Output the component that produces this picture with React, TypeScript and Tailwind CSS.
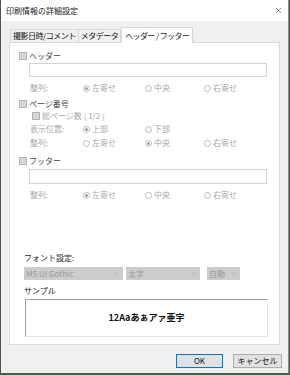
import React from "react";
import { ChevronDown, X } from "lucide-react";

const FONT = "font-['Noto_Sans_CJK_JP','Noto_Sans',sans-serif]";

function CheckBox() {
  return <span className="inline-block h-[8px] w-[8px] shrink-0 border border-[#b4b4b4] bg-[#d6d6d6]" />;
}

function Radio({ checked, label }: { checked?: boolean; label: string }) {
  return (
    <span className="flex items-center gap-[2px] text-[#a8a8a8]">
      <span className="flex h-[7px] w-[7px] items-center justify-center rounded-full border border-[#bcbcbc] bg-white">
        {checked && <span className="h-[3px] w-[3px] rounded-full bg-[#9c9c9c]" />}
      </span>
      <span>{label}</span>
    </span>
  );
}

function OptionRow({ label, opts, mt }: { label: string; opts: { label: string; checked?: boolean }[]; mt: string }) {
  return (
    <div className={`flex h-[12px] items-center ${mt}`}>
      <span className="w-[73px] shrink-0 whitespace-nowrap pl-[20px] text-[#a8a8a8]">{label}</span>
      <div className="grid grid-cols-[62px_59px_60px]">
        {opts.map((o) => (
          <Radio key={o.label} label={o.label} checked={o.checked} />
        ))}
      </div>
    </div>
  );
}

function Select({ value, w }: { value: string; w: string }) {
  return (
    <div className={`flex h-[13px] items-center justify-between bg-[#cccccc] pl-[2px] pr-[3px] text-[#9a9a9a] ${w}`}>
      <span>{value}</span>
      <ChevronDown className="h-[7px] w-[7px] text-[#a8a8a8]" strokeWidth={2} />
    </div>
  );
}

export default function App() {
  const align = [{ label: "左寄せ", checked: true }, { label: "中央" }, { label: "右寄せ" }];

  return (
    <div className={`h-[375px] w-[290px] overflow-hidden bg-[#4b5a48] pl-[1px] text-[8px] leading-[12px] ${FONT}`}>
      <div className="flex h-[373px] w-[288px] flex-col border-r border-[#8c8c8c] bg-[#f0f0f0]">
        {/* タイトルバー */}
        <div className="flex h-[21px] shrink-0 items-center justify-between bg-white pl-[5px] pr-[5px] text-[#1a1a1a]">
          <span>印刷情報の詳細設定</span>
          <X className="h-[9px] w-[9px] text-[#333]" strokeWidth={1.4} />
        </div>

        {/* タブ */}
        <div className="mt-[6px] flex h-[15px] items-end pl-[9px] text-[#111]">
          <div className="flex h-[13px] items-center border border-b-0 border-[#d9d9d9] bg-[#f0f0f0] px-[2px] tracking-[-0.5px]">撮影日時/コメント</div>
          <div className="flex h-[13px] items-center border border-b-0 border-l-0 border-[#d9d9d9] bg-[#f0f0f0] px-[2px] tracking-[-0.5px]">メタデータ</div>
          <div className="relative z-10 -mb-[1px] flex h-[16px] items-center border border-b-0 border-[#d9d9d9] bg-white px-[3px] tracking-[-0.6px] text-[#222]">
            ヘッダー / フッター
          </div>
        </div>

        {/* パネル */}
        <div className="mx-[8px] flex h-[303px] flex-col border border-[#d9d9d9] bg-white pt-[7px] text-[#a8a8a8]">
          <div className="flex h-[12px] items-center gap-[2px] pl-[9px] text-[#444]">
            <CheckBox />
            <span>ヘッダー</span>
          </div>
          <div className="ml-[19px] mt-[1px] h-[14px] w-[238px] border border-[#d4d4d4] bg-white" />
          <OptionRow label="整列:" opts={align} mt="mt-[5px]" />

          <div className="mt-[4px] flex h-[12px] items-center gap-[2px] pl-[9px] text-[#444]">
            <CheckBox />
            <span>ページ番号</span>
          </div>
          <div className="flex h-[12px] items-center gap-[2px] pl-[22px]">
            <CheckBox />
            <span>総ページ数 ( 1/2 )</span>
          </div>
          <OptionRow label="表示位置:" opts={[{ label: "上部", checked: true }, { label: "下部" }]} mt="mt-[1px]" />
          <OptionRow label="整列:" opts={[{ label: "左寄せ" }, { label: "中央", checked: true }, { label: "右寄せ" }]} mt="mt-[2px]" />

          <div className="mt-[6px] flex h-[12px] items-center gap-[2px] pl-[9px] text-[#444]">
            <CheckBox />
            <span>フッター</span>
          </div>
          <div className="ml-[19px] mt-[2px] h-[15px] w-[238px] border border-[#d4d4d4] bg-white" />
          <OptionRow label="整列:" opts={align} mt="mt-[5px]" />

          <div className="mt-[51px] h-[12px] pl-[14px] text-[#222]">フォント設定:</div>
          <div className="mt-[3px] flex gap-[3px] pl-[14px]">
            <Select value="MS UI Gothic" w="w-[99px]" />
            <Select value="太字" w="w-[74px]" />
            <div className="w-[1px]" />
            <Select value="自動" w="w-[33px]" />
          </div>
          <div className="mt-[5px] h-[12px] pl-[14px] text-[#222]">サンプル</div>
          <div className="ml-[15px] mt-[2px] flex h-[38px] w-[243px] items-center justify-center border border-b-[#e6e6e6] border-l-[#a0a0a0] border-r-[#e6e6e6] border-t-[#a0a0a0] bg-white text-[9px] font-bold text-[#111]">
            12Aaあぁアァ亜宇
          </div>
        </div>

        {/* ボタン */}
        <div className="mt-[9px] flex justify-end gap-[10px] pr-[6px] text-[#111]">
          <button type="button" className="h-[14px] w-[47px] border border-[#0078d7] bg-[#e1e1e1] leading-[12px]">
            OK
          </button>
          <button type="button" className="h-[14px] w-[49px] border border-[#adadad] bg-[#e1e1e1] leading-[12px]">
            キャンセル
          </button>
        </div>
      </div>
    </div>
  );
}
